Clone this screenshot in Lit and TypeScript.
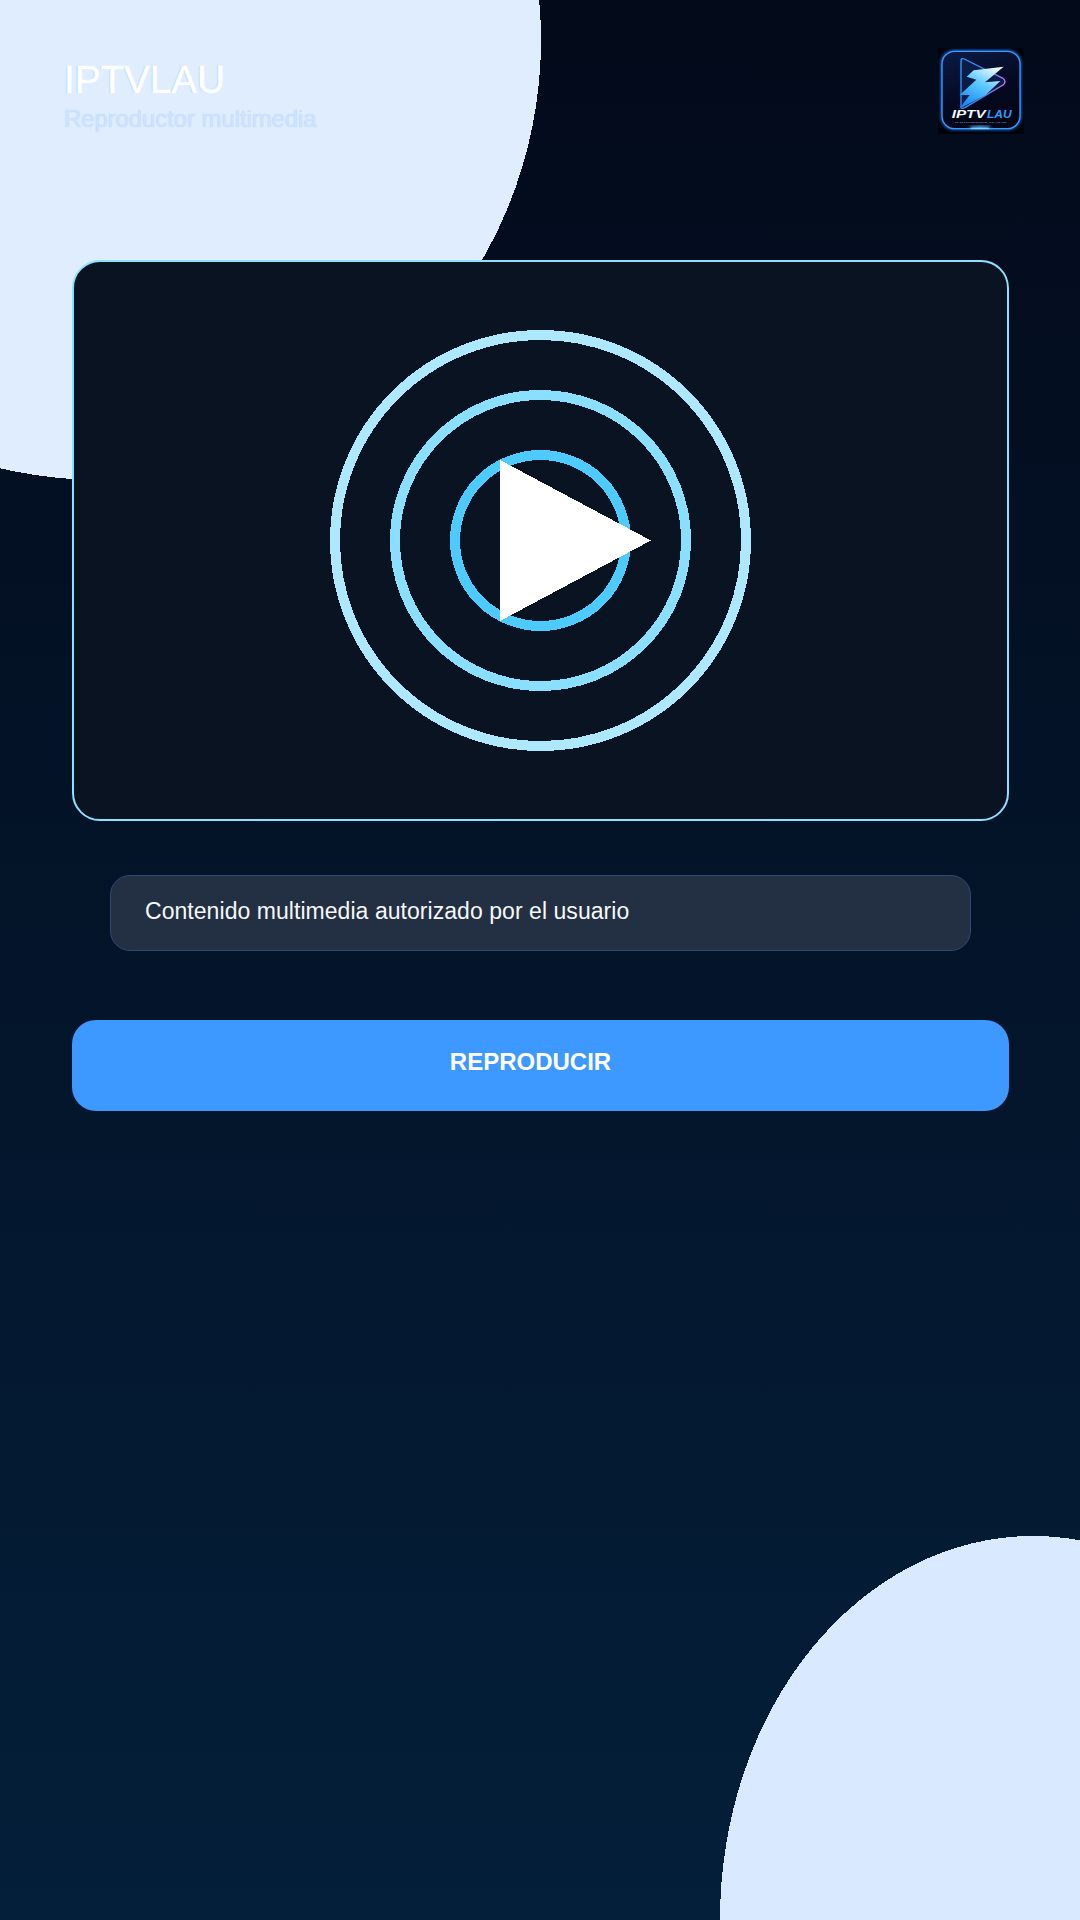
import { LitElement, html, css } from 'lit';
import { customElement } from 'lit/decorators.js';

@customElement('app-logo')
class AppLogo extends LitElement {
  static styles = css`
    :host {
      display: block;
      width: 86px;
      height: 86px;
    }
    svg {
      display: block;
    }
    text {
      font-family: 'Liberation Sans', Arial, sans-serif;
      font-weight: 700;
      font-style: italic;
    }
  `;

  render() {
    return html`
      <svg width="86" height="86" viewBox="9 9 258 258">
        <defs>
          <linearGradient id="tile" x1="0" y1="0" x2="0.4" y2="1">
            <stop offset="0" stop-color="#0b1c46" />
            <stop offset="0.6" stop-color="#050a22" />
            <stop offset="1" stop-color="#030616" />
          </linearGradient>
          <linearGradient id="edge" x1="0" y1="0" x2="1" y2="0.5">
            <stop offset="0" stop-color="#2f9cff" />
            <stop offset="0.65" stop-color="#3a84f5" />
            <stop offset="1" stop-color="#d070f5" />
          </linearGradient>
          <linearGradient id="bolt" x1="0.75" y1="0" x2="0.2" y2="1">
            <stop offset="0" stop-color="#eefaff" />
            <stop offset="0.4" stop-color="#63ccff" />
            <stop offset="1" stop-color="#1283f5" />
          </linearGradient>
          <filter id="glow" x="-20%" y="-20%" width="140%" height="140%">
            <feGaussianBlur stdDeviation="4" />
          </filter>
        </defs>
        <rect x="9" y="9" width="258" height="258" fill="#01030b" />
        <rect x="21" y="19" width="234" height="232" rx="38" fill="none" stroke="#1c6fe8" stroke-width="8" filter="url(#glow)" />
        <rect x="21" y="19" width="234" height="232" rx="38" fill="url(#tile)" stroke="#3a9cff" stroke-width="4" />
        <path d="M78 48 Q78 38 88 42 L204 100 Q216 110 204 120 L90 188 Q78 194 78 184 Z" fill="#0a1c48" stroke="url(#edge)" stroke-width="4" />
        <path d="M95 95 L116 76 L206 65 L150 112 L196 108 L152 150 L72 192 L104 150 L74 150 L124 104 Z" fill="url(#bolt)" />
        <ellipse cx="135" cy="247" rx="34" ry="5" fill="#4db4ff" filter="url(#glow)" />
        <rect x="108" y="248" width="54" height="3" rx="1.5" fill="#9fdcff" />
        <text x="50" y="220" font-size="30" fill="#f4f8ff" textLength="102" lengthAdjust="spacingAndGlyphs">IPTV</text>
        <text x="156" y="220" font-size="30" fill="#2b9dff" textLength="74" lengthAdjust="spacingAndGlyphs">LAU</text>
        <text x="60" y="233" font-size="6" fill="#8aa4c8" textLength="155">TU ENTRETENIMIENTO, SIN LÍMITES</text>
      </svg>
    `;
  }
}

@customElement('app-root')
class AppRoot extends LitElement {
  static styles = css`
    :host {
      display: block;
      width: 1080px;
      height: 1920px;
      font-family: 'Liberation Sans', Arial, sans-serif;
    }
    .page {
      position: relative;
      height: 1920px;
      overflow: hidden;
      background: linear-gradient(180deg, #030a1a 0%, #041f3a 100%);
    }
    .blobs {
      position: absolute;
      inset: 0;
      display: block;
    }
    .content {
      position: relative;
      display: flex;
      flex-direction: column;
    }
    header {
      display: flex;
      justify-content: space-between;
      align-items: flex-start;
      padding: 48px 56px 0 64px;
      height: 260px;
      box-sizing: border-box;
    }
    h1 {
      margin: 10px 0 0;
      font-size: 38.6px;
      line-height: 44px;
      font-weight: 400;
      color: #ffffff;
      -webkit-text-stroke: 0.5px #ffffff;
      text-shadow: -1px 0 1px #b4d4ff;
    }
    .sub {
      margin: 2px 0 0;
      font-size: 24px;
      line-height: 30px;
      letter-spacing: -0.1px;
      color: #cfe2ff;
      text-shadow: 0 0 1px #a9cbff;
    }
    main {
      display: flex;
      flex-direction: column;
      padding: 0 71px 0 72px;
    }
    .player {
      display: flex;
      align-items: center;
      justify-content: center;
      height: 561px;
      box-sizing: border-box;
      border: 2px solid #8fdfff;
      border-radius: 28px;
      background: #0a1321;
    }
    .player svg {
      display: block;
      margin: 0 1px 1px 0;
    }
    .info {
      margin: 54px 38px 0;
      height: 76px;
      box-sizing: border-box;
      padding: 0 34px 3px;
      display: flex;
      align-items: center;
      border: 1px solid #2f4a75;
      border-radius: 20px;
      background: #232f42;
      color: #f6f8fb;
      font-size: 23px;
      letter-spacing: 0.05px;
    }
    .play {
      margin-top: 69px;
      height: 91px;
      padding: 0 20px 7px 0;
      box-sizing: border-box;
      display: flex;
      align-items: center;
      justify-content: center;
      border-radius: 24px;
      background: #3d98ff;
      color: #ffffff;
      font-size: 24px;
      font-weight: 700;
    }
  `;

  render() {
    return html`
      <div class="page">
        <svg class="blobs" width="1080" height="1920" viewBox="0 0 1080 1920" shape-rendering="crispEdges">
          <circle cx="101" cy="40" r="440" fill="#dfedff" />
          <ellipse cx="1033" cy="1920" rx="313" ry="384" fill="#d9e9ff" />
        </svg>
        <div class="content">
          <header>
            <div>
              <h1>IPTVLAU</h1>
              <p class="sub">Reproductor multimedia</p>
            </div>
            <app-logo></app-logo>
          </header>
          <main>
            <section class="player">
              <svg width="440" height="440" viewBox="0 0 440 440" fill="none" stroke-width="10" shape-rendering="crispEdges">
                <circle cx="220.5" cy="220.5" r="205.5" stroke="#aee8ff" />
                <circle cx="220.5" cy="220.5" r="145.5" stroke="#8adfff" />
                <circle cx="220.5" cy="220.5" r="85.5" stroke="#4dcbff" />
                <polygon points="180,140 180,301 331,220.5" fill="#ffffff" />
              </svg>
            </section>
            <div class="info">Contenido multimedia autorizado por el usuario</div>
            <div class="play">REPRODUCIR</div>
          </main>
        </div>
      </div>
    `;
  }
}
